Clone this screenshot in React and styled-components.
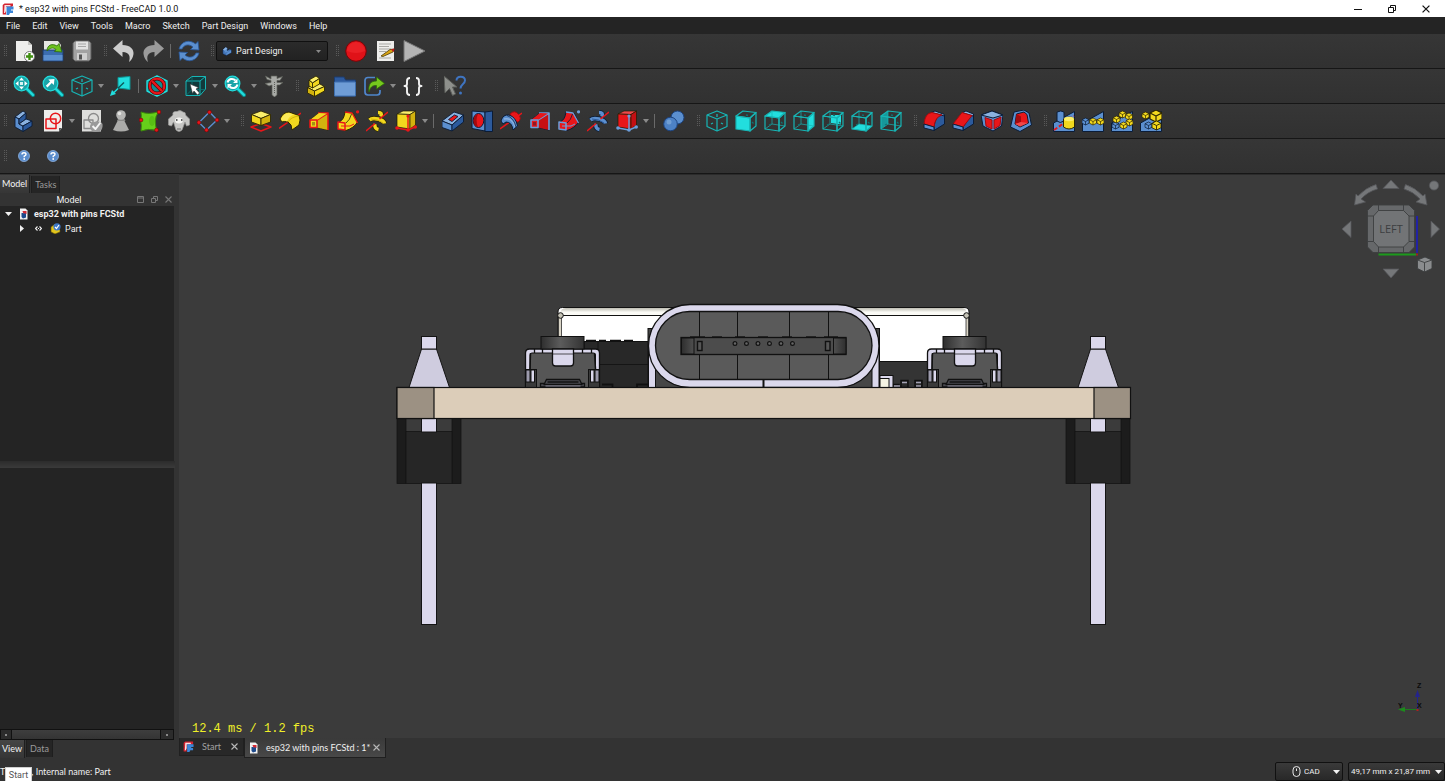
import React from "react";
import styled, { createGlobalStyle, css } from "styled-components";

const UI_FONT = 'Roboto, "Open Sans", sans-serif';
const NARROW_FONT = 'Lato, Roboto, sans-serif';

const GlobalStyle = createGlobalStyle`
  * { box-sizing: border-box; }
  html, body, #root { height: 100%; }
  body { margin: 0; background: #333333; color: #f0f0f0; font: 9px/12px ${UI_FONT}; overflow: hidden; }
  button, select { font: inherit; color: inherit; }
`;

/* ---------- window frame ---------- */

const Window = styled.div`
  display: flex;
  flex-direction: column;
  height: 100vh;
  position: relative;
`;

const TitleBar = styled.header`
  display: flex;
  align-items: center;
  height: 17px;
  flex: none;
  padding: 0 2px;
  gap: 5px;
  background: #ffffff;
  color: #111111;
`;

const WindowTitle = styled.h1`
  flex: 1;
  margin: 0;
  font-size: 9px;
  line-height: 16px;
  font-weight: 400;
`;

const WindowControls = styled.div`
  display: flex;
`;

const PlainButton = styled.button`
  display: flex;
  align-items: center;
  justify-content: center;
  padding: 0;
  border: 0;
  background: none;
`;

const WindowButton = styled(PlainButton)`
  width: 34px;
  height: 16px;
`;

const MenuBar = styled.nav`
  display: flex;
  flex: none;
  height: 17px;
  background: #242424;
`;

const MenuItem = styled(PlainButton)`
  padding: 0 6px;
  line-height: 16px;
`;

/* ---------- toolbars ---------- */

const ToolRow = styled.div`
  display: flex;
  align-items: center;
  flex: none;
  height: 35px;
  background: linear-gradient(#363636, #313131);
  border-bottom: 1px solid #161616;
`;

const DOTS = "repeating-linear-gradient(#5a5a5a 0 1px, transparent 1px 2px)";

const Handle = styled.span`
  flex: none;
  width: ${(p) => (p.$first ? 9 : p.$wide ? 14 : 13)}px;
  height: 12px;
  background: ${DOTS} right 4px top / 1px 12px no-repeat, ${DOTS} right 2px top / 1px 12px no-repeat;
`;

const Separator = styled.span`
  flex: none;
  width: 1px;
  height: 14px;
  margin: 0 ${(p) => (p.$wide ? 4 : 3)}px 0 3px;
  background: #6a6a6a;
`;

const Tool = styled(PlainButton)`
  flex: none;
  width: 29px;
  height: 29px;
`;

const DropTool = styled(PlainButton)`
  flex: none;
  width: 10px;
  height: 29px;
`;

const ComboBox = styled.label`
  display: flex;
  align-items: center;
  flex: none;
  width: 112px;
  height: 20px;
  padding: 0 6px 0 5px;
  border: 1px solid #101010;
  border-radius: 2px;
  background: linear-gradient(#2b2b2b, #222222);
`;

const PlainSelect = styled.select`
  flex: 1;
  min-width: 0;
  appearance: none;
  padding: 0 0 0 ${(p) => p.$indent || 0}px;
  border: 0;
  background: none;
  outline: 0;
`;

/* ---------- left dock ---------- */

const Body = styled.main`
  display: flex;
  flex: 1;
  min-height: 0;
`;

const Dock = styled.aside`
  display: flex;
  flex-direction: column;
  flex: none;
  width: 175px;
  margin-right: 4px;
`;

const TabStrip = styled.div`
  display: flex;
  flex: none;
  gap: 1px;
  height: ${(p) => p.$height}px;
  padding-top: ${(p) => p.$top || 0}px;
  align-items: ${(p) => (p.$top ? "flex-end" : "flex-start")};
  font-family: ${NARROW_FONT};
`;

const DockTab = styled(PlainButton)`
  height: 17px;
  padding: 0 3px;
  border: 1px solid #1e1e1e;
  border-width: 0 1px;
  background: #252525;
  color: #9a9a9a;
  ${(p) =>
    p.$active &&
    css`
      height: 18px;
      padding: 0 2px;
      border-left: 0;
      background: linear-gradient(#454545, #363636);
      color: #f4f4f4;
    `}
`;

const DockTitle = styled.div`
  display: flex;
  align-items: center;
  flex: none;
  height: 13px;
  padding-left: 5px;
`;

const DockName = styled.h2`
  flex: 1;
  margin: 0;
  font-size: 9px;
  font-weight: 400;
  line-height: 12px;
  text-align: center;
`;

const DockButton = styled(PlainButton)`
  width: 14px;
  height: 12px;
`;

const Tree = styled.ul`
  flex: 255 1 0;
  margin: 0 1px 0 0;
  padding: 0;
  list-style: none;
  background: #242424;
`;

const TreeRow = styled.li`
  display: flex;
  align-items: center;
  height: 15px;
  padding-left: ${(p) => (p.$child ? 18 : 4)}px;
  font-weight: ${(p) => (p.$child ? 400 : 700)};
`;

const TreeToggle = styled(PlainButton)`
  width: 8px;
  height: 10px;
`;

const TreeGlyph = styled.span`
  display: flex;
  margin-left: ${(p) => p.$gap}px;
`;

const TreeLabel = styled.span`
  margin-left: ${(p) => p.$gap}px;
`;

const Splitter = styled.div`
  flex: none;
  height: 7px;
  background: linear-gradient(#2c2c2c, #3a3a3a);
`;

const Properties = styled.section`
  flex: 261 1 0;
  margin-right: 1px;
  background: #242424;
`;

const ScrollTrack = styled.div`
  display: flex;
  align-items: stretch;
  flex: none;
  height: 11px;
  margin-right: 1px;
  border: 1px solid #111111;
  background: #1a1a1a;
`;

const ScrollThumb = styled.span`
  flex: 1;
  border: 1px solid #111111;
  border-width: 0 1px;
  background: linear-gradient(#3e3e3e, #343434);
`;

const ScrollEnd = styled(PlainButton)`
  width: ${(p) => p.$width}px;
  background: #2c2c2c;
`;

const ScrollDot = styled.span`
  width: 2px;
  height: 2px;
  background: #8a8a8a;
`;

/* ---------- document area ---------- */

const DocumentArea = styled.section`
  display: flex;
  flex-direction: column;
  flex: 1;
  min-width: 0;
`;

const Viewport = styled.div`
  position: relative;
  flex: 1;
  min-height: 0;
  background: #3b3b3b;
  border-top: 1px solid #2b2b2b;
`;

const Scene = styled.svg`
  display: block;
  width: 100%;
  height: 100%;
`;

const NavigationOverlay = styled.div`
  position: absolute;
  top: 1px;
  right: 1px;
`;

const AxisOverlay = styled.div`
  position: absolute;
  right: 15px;
  bottom: 20px;
`;

const FrameStats = styled.output`
  position: absolute;
  left: 13px;
  bottom: 2px;
  color: #f0f028;
  font: 12px/14px "Liberation Mono", monospace;
  white-space: pre;
`;

const DocumentTabs = styled.div`
  display: flex;
  align-items: flex-start;
  flex: none;
  height: 20px;
  font-family: ${NARROW_FONT};
`;

const DocumentTab = styled.div`
  display: flex;
  align-items: center;
  height: ${(p) => (p.$active ? 20 : 18)}px;
  width: ${(p) => (p.$active ? 142 : 65)}px;
  padding: 0 5px 0 ${(p) => (p.$active ? 4 : 3)}px;
  border: 1px solid #202020;
  border-top: 0;
  background: ${(p) => (p.$active ? "linear-gradient(#3a3a3a, #484848)" : "#282828")};
  color: ${(p) => (p.$active ? "#f0f0f0" : "#a0a0a0")};
`;

const TabName = styled(PlainButton)`
  flex: 1;
  justify-content: flex-start;
  padding-left: ${(p) => p.$gap}px;
  white-space: nowrap;
`;

/* ---------- status bar ---------- */

const StatusBar = styled.footer`
  display: flex;
  align-items: center;
  flex: none;
  height: 23px;
  gap: 5px;
  padding: 4px 0 0;
`;

const StatusText = styled.p`
  display: flex;
  flex: 1;
  gap: 26px;
  margin: 0;
  font-family: ${NARROW_FONT};
`;

const StatusCombo = styled.label`
  display: flex;
  align-items: center;
  width: ${(p) => p.$width}px;
  height: 19px;
  padding: 0 2px 0 ${(p) => p.$indent}px;
  border: 1px solid #111111;
  border-radius: 2px;
  background: linear-gradient(#3a3a3a, #282828);
  font-size: 8px;
`;

const Tooltip = styled.div`
  position: absolute;
  left: 5px;
  bottom: 0;
  width: 27px;
  padding-top: 1px;
  border: 1px solid #d0d0d0;
  border-bottom: 0;
  background: #ffffff;
  color: #555555;
  line-height: 12px;
  text-align: center;
`;

/* ---------- icon helpers ---------- */

const Glyph = ({ size = 22, children }) => (
  <svg width={size} height={size} viewBox="0 0 22 22" fill="none" strokeLinejoin="round" aria-hidden="true">
    {children}
  </svg>
);

const Caret = ({ color = "#8a8a8a", w = 6, h = 4 }) => (
  <svg width={w} height={h} viewBox="0 0 6 4" preserveAspectRatio="none" aria-hidden="true">
    <path d="M0 0H6L3 4Z" fill={color} />
  </svg>
);

const TEAL = "#17b5b5";
const CYAN = "#22dede";
const BLUE = "#5b8fcf";
const LIGHT_BLUE = "#8ab2e0";
const DARK_BLUE = "#2c5a9c";
const EDGE_BLUE = "#0b1c36";
const YELLOW = "#f2d81e";
const LIGHT_YELLOW = "#fbef6a";
const DARK_YELLOW = "#d2b20e";
const EDGE_YELLOW = "#2e2702";
const RED = "#e8161a";
const DARK_RED = "#a30a0e";

const NewFile = () => (
  <Glyph>
    <path d="M3 1H15L19 5V21H3Z" fill="#eeeeec" />
    <path d="M15 1V5H19Z" fill="#c4c4c0" />
    <circle cx="16.500" cy="16.500" r="5" fill="#fff" stroke="#777" />
    <path d="M16.500 13V20M13 16.500H20" stroke="#3f8f10" strokeWidth="2.400" />
  </Glyph>
);
const OpenFile = () => (
  <Glyph>
    <path d="M2 1H16L19 5V12H2Z" fill="#e6e6e2" />
    <path d="M1 10H21V21H1Z" fill="#3b6db0" stroke="#1c3b6b" />
    <path d="M1.500 15H20.500V20.500H1.500Z" fill={BLUE} />
    <path d="M5 11C5 5 10 3 15 6L17 3.500L20 12L12.500 11.500L14 9.500C11 7 8 8 5 11Z" fill="#6cc21c" stroke="#2c6a08" strokeWidth=".8" />
  </Glyph>
);
const SaveFile = () => (
  <Glyph>
    <path d="M2 3L4 1H18L20 3V19L18 21H4L2 19Z" fill="#a2a2a2" stroke="#5c5c5c" />
    <rect x="5" y="1.500" width="12" height="8" fill="#e2e2e2" />
    <path d="M7 4H15M7 6.500H15" stroke="#a6a6a6" />
    <rect x="6" y="13" width="10" height="7" fill="#cfcfcf" />
    <rect x="8" y="14.500" width="3" height="5" fill="#555" />
  </Glyph>
);
const UndoArrow = ({ mirror }) => (
  <Glyph>
    <g transform={mirror ? "translate(22 0) scale(-1 1)" : undefined}>
      <path d="M0 8.500L9.500 0V5C17 5 21 9 20.500 14C20 18 18 20.500 16 22C17.500 17 17 12.500 9.500 12V17Z" fill={mirror ? "#9b9b9b" : "#cdcdcd"} />
    </g>
  </Glyph>
);
const Refresh = () => (
  <Glyph>
    <g fill={BLUE} stroke="#28589a" strokeWidth=".8">
      <path d="M1 9C3 1 12 -1 17.500 4L20 1.500L21 10L12.500 9.500L15 7C11 3.500 6 4.500 4 9Z" />
      <path d="M21 13C19 21 10 23 4.500 18L2 20.500L1 12L9.500 12.500L7 15C11 18.500 16 17.500 18 13Z" />
    </g>
  </Glyph>
);
const PartDesignMark = ({ size }) => (
  <Glyph size={size}>
    <path d="M2 8L8 3L12 5V10L17 7L21 9V15L10 21L2 17Z" fill={BLUE} stroke={EDGE_BLUE} strokeWidth="1.200" />
    <path d="M2 8L6 10V19L2 17ZM6 15L14 12L17 7L21 9L10 15.500V21L6 19Z" fill={DARK_BLUE} opacity=".55" />
    <path d="M2 8L8 3L12 5L6 10Z" fill={LIGHT_BLUE} />
  </Glyph>
);
const Body3D = () => (
  <Glyph>
    <g stroke={EDGE_BLUE} strokeWidth=".9">
      <path d="M2 7L10 1L13 3L6 9Z" fill={LIGHT_BLUE} />
      <path d="M2 7L6 9V14L10 16V21.500L2 17Z" fill={BLUE} />
      <path d="M6 9L13 3V9L6 14Z" fill={DARK_BLUE} />
      <path d="M6 14L13 9L19 11L10 16Z" fill={LIGHT_BLUE} />
      <path d="M10 16L19 11V16L10 21.500Z" fill={DARK_BLUE} />
    </g>
  </Glyph>
);
const Record = () => (
  <Glyph>
    <circle cx="11" cy="11" r="10.300" fill="#e01218" stroke="#7a0508" />
    <path d="M2 11A9 9 0 0 1 20 11Q11 15 2 11Z" fill="#f02a2e" opacity=".6" />
  </Glyph>
);
const MacroEdit = () => (
  <Glyph>
    <rect x="3" y="1" width="17" height="20" fill="#eeeeec" />
    <path d="M5 4H17M5 6.500H15M5 9H17M5 11.500H12M5 18H17" stroke="#a9a9a5" />
    <path d="M7 16L16 9.500L20 9L19 12L9 16.500Z" fill="#d9a514" stroke="#4a3a08" strokeWidth=".8" />
    <path d="M17 9.500L20.500 8.500L19.500 12Z" fill="#c2161a" />
  </Glyph>
);
const Play = () => (
  <Glyph>
    <path d="M1 .5L22 11L1 21.500Z" fill="#b4b4b4" stroke="#757575" />
  </Glyph>
);

const Magnifier = ({ children }) => (
  <Glyph>
    <path d="M13.500 13.500L20 20" stroke="#0b8a8a" strokeWidth="4" strokeLinecap="round" />
    <path d="M14 14L20 20" stroke={CYAN} strokeWidth="2.200" strokeLinecap="round" />
    <circle cx="8.500" cy="8.500" r="7.300" fill="#1aa4a8" stroke={CYAN} strokeWidth="1.300" />
    {children}
  </Glyph>
);
const FitAll = () => (
  <Magnifier>
    <path d="M8.500 2.500L11 5.500H6ZM8.500 14.500L6 11.500H11ZM2.500 8.500L5.500 6V11ZM14.500 8.500L11.500 11V6Z" fill="#fff" />
    <rect x="7" y="7" width="3" height="3" fill="#d8f4f4" />
  </Magnifier>
);
const FitSelection = () => (
  <Magnifier>
    <path d="M12.500 4L11.800 10L9.800 8L5.500 12.500L3.800 10.800L8.200 6.500L6.300 4.600Z" fill="#fff" />
  </Magnifier>
);
const ViewSync = () => (
  <Magnifier>
    <path d="M3.500 7.500C4.500 3.500 9 3 11.500 5.500M13.500 9.500C12.500 13.500 8 14 5.500 11.500" stroke="#fff" strokeWidth="2" />
    <path d="M13.500 3.500V8H9ZM3.500 13.500V9H8Z" fill="#fff" />
  </Magnifier>
);

const Isometric = () => (
  <Glyph>
    <g stroke={TEAL} strokeWidth="1.200">
      <path d="M11 1L21 5V16.500L11 21L1 16.500V5Z" />
      <path d="M1 5L11 9L21 5M11 9V21" />
      <path d="M11 4V7M5 14L7 13M15 13L17 14" strokeWidth="1.300" />
    </g>
  </Glyph>
);
const AlignView = () => (
  <Glyph>
    <path d="M8 2.500L20 1.500V14.500L8 13Z" fill={CYAN} stroke="#0d9494" />
    <path d="M14 7.500L3 18" stroke="#0b5a5c" strokeWidth="1.400" />
    <path d="M8 13.500L4 17.500" stroke={CYAN} strokeWidth="1.400" />
    <path d="M0 21L2 15L6 19Z" fill={CYAN} />
  </Glyph>
);
const DrawStyle = () => (
  <Glyph>
    <path d="M1 6L11 1L21 6V16L11 21L1 16Z" fill="#0f8e90" stroke={CYAN} strokeWidth="1.400" />
    <circle cx="11" cy="11" r="7.300" stroke="#5a0406" strokeWidth="3.600" />
    <circle cx="11" cy="11" r="7.300" stroke={RED} strokeWidth="2.200" />
    <path d="M6 6L16 16" stroke="#5a0406" strokeWidth="3.800" />
    <path d="M6 6L16 16" stroke={RED} strokeWidth="2.400" />
  </Glyph>
);
const BoxSelect = () => (
  <Glyph>
    <path d="M1 6L7 1.500H20.500V14L15 20.500H1Z" fill="#12393b" stroke={TEAL} />
    <path d="M1 6H15V20M15 6L20.500 1.500" stroke={TEAL} />
    <path d="M7 2V14.500L1.500 20M7 14.500H20" stroke="#0e7474" strokeWidth=".8" />
    <path d="M5 9L13.500 12.500L11 14L14.500 18L12.500 20L9 16L7.500 18.500Z" fill="#fff" stroke="#333" strokeWidth=".6" />
  </Glyph>
);
const Caliper = () => (
  <Glyph>
    <path d="M2.500 1L8 4V1H14V3.500L19.500 1.500L17 5.500H14V7.500H20L16.500 10H14V20L11.500 22L9 20V10L6 11L2 8.500L8 7.500V5.500L4 4.500Z" fill="#a8aaa6" stroke="#5c5e58" strokeWidth=".7" />
    <path d="M11.500 7V19" stroke="#5e605a" strokeDasharray="1 1" />
  </Glyph>
);
const PartBlocks = () => (
  <Glyph>
    <g stroke={EDGE_YELLOW} strokeWidth=".9">
      <path d="M2.500 12.500L14 8.500L19.500 11.500L9.500 16Z" fill={LIGHT_YELLOW} />
      <path d="M9.500 16L19.500 11.500V16L9.500 21.500Z" fill={YELLOW} />
      <path d="M2.500 12.500L9.500 16V21.500L2.500 18Z" fill={DARK_YELLOW} />
      <path d="M4 5L11 1L14.500 3.500L7.500 8Z" fill={LIGHT_YELLOW} />
      <path d="M4 5L7.500 8L14.500 3.500V9L7.500 13L4 11Z" fill={YELLOW} />
      <path d="M7.500 8V13" />
    </g>
  </Glyph>
);
const Group = () => (
  <Glyph>
    <path d="M.5 2H10L11.500 5H21.500V21H.5Z" fill="#2d5a9e" stroke="#1c3d70" />
    <path d="M.5 7H21.500V21H.5Z" fill="#6f9dd6" stroke="#3e6fae" />
  </Glyph>
);
const LinkMake = () => (
  <Glyph>
    <path d="M12 2.500H5Q2 2.500 2 5.500V17Q2 20 5 20H14Q17 20 17 17V15" stroke="#4f86cc" strokeWidth="1.700" />
    <path d="M6 17C5 9 8 6 13.500 6V2L21.500 8.500L13.500 14V10.500C9 10.500 7.500 12 6 17Z" fill="#76c81e" stroke="#2c6a08" strokeWidth=".8" />
  </Glyph>
);
const Expression = () => (
  <Glyph>
    <path d="M8 3Q5 3 5 6V9Q5 11 2.500 11Q5 11 5 13V17Q5 20 8 20M14 3Q17 3 17 6V9Q17 11 19.500 11Q17 11 17 13V17Q17 20 14 20" stroke="#f2f2f2" strokeWidth="1.900" />
  </Glyph>
);
const WhatsThis = () => (
  <Glyph>
    <path d="M0 1L13 12H8.500L11.500 19L8.500 20.500L5.500 13.500L1 18Z" fill="#8e908c" stroke="#5a5c58" />
    <path d="M12.500 5.500C12.500 .5 21 .5 21 5.500C21 9 16.500 9 16.500 13.500" stroke="#3f74c0" strokeWidth="2" />
    <circle cx="16.500" cy="18" r="1.500" fill="#3f74c0" />
  </Glyph>
);

const NewSketch = () => (
  <Glyph>
    <path d="M2 0H20V18L17 21.500H2Z" fill="#eeeeec" />
    <path d="M20 18H17V21.500Z" fill="#555" />
    <rect x="4" y="9" width="10" height="9.500" stroke={RED} strokeWidth="1.500" />
    <circle cx="13.500" cy="8.500" r="5.200" stroke={RED} strokeWidth="1.500" />
  </Glyph>
);
const ValidateSketch = () => (
  <Glyph>
    <path d="M1 0H20V21.500H1Z" fill="#dededc" />
    <rect x="3" y="10" width="9" height="8.500" stroke="#8a8a8a" strokeWidth="1.300" />
    <circle cx="12.500" cy="8.500" r="5" stroke="#8a8a8a" strokeWidth="1.300" />
    <path d="M9 16C10 11 20 10 21.500 14C22 19 20 22 15 22C11 22 9 20 9 16Z" fill="#9a9a9a" />
    <path d="M11.500 16L14.500 19L19.500 12.500" stroke="#f4f4f4" strokeWidth="2" />
  </Glyph>
);
const CheckGeometry = () => (
  <Glyph>
    <path d="M8.500 9L3 20Q11 23 19 20L13.500 9Z" fill="#ababa9" />
    <path d="M8 9H14.500L15.500 11H7Z" fill="#8a8a88" />
    <circle cx="11" cy="5" r="4.800" fill="#b6b6b4" />
    <circle cx="9.500" cy="3.500" r="1.800" fill="#e4e4e2" />
  </Glyph>
);
const SubShape = () => (
  <Glyph>
    <path d="M2 2Q10 5 20 1.500Q16 6 16.500 11Q16 16 18 20.500Q9 18 2 21Q3 15 1.500 10.500Q3 6 2 2Z" fill="#66d01a" stroke="#3c8a0a" />
    <ellipse cx="13" cy="11" rx="3" ry="5" fill="#4aa80e" opacity=".45" />
    <g fill={RED} stroke="#6b0406" strokeWidth=".6">
      <circle cx="20" cy="2" r="1.900" />
      <circle cx="2" cy="10" r="1.900" />
      <circle cx="17.500" cy="20" r="1.900" />
    </g>
  </Glyph>
);
const Sheep = () => (
  <Glyph>
    <path d="M5 5Q4 1 9 1.500Q12 -.5 15 2Q18 2 17.500 5L21.500 9V15L18.500 16L17 12L14 20Q11 23 8 20L5.500 12L3.500 16L.5 15V9Z" fill="#c6c6c4" stroke="#9a9a98" strokeWidth=".7" />
    <ellipse cx="11" cy="10.500" rx="4" ry="3" fill="#f2f2f0" />
    <path d="M8 10H9.500M13 10H14.500" stroke="#333" strokeWidth="1.500" />
    <path d="M9 19H13" stroke="#666" />
  </Glyph>
);
const Datum = () => (
  <Glyph>
    <path d="M12.500 2L20 10L9.500 20L2 12.500Z" stroke={BLUE} strokeWidth="1.400" />
    <g fill={RED} stroke="#6b0406" strokeWidth=".6">
      <circle cx="12.500" cy="2.200" r="1.900" />
      <circle cx="20" cy="10" r="1.900" />
      <circle cx="9.500" cy="20" r="1.900" />
      <circle cx="1.900" cy="12.500" r="1.900" />
    </g>
  </Glyph>
);

const Pad = () => (
  <Glyph>
    <path d="M1 17L11 13.500L21 17L11 21Z" stroke={RED} strokeWidth="1.400" />
    <g stroke={EDGE_YELLOW} strokeWidth=".9">
      <path d="M1.500 4.500L11 1L20.500 4.500L11 8.500Z" fill={LIGHT_YELLOW} />
      <path d="M1.500 4.500L11 8.500V15.500L1.500 12Z" fill={YELLOW} />
      <path d="M11 8.500L20.500 4.500V12L11 15.500Z" fill={DARK_YELLOW} />
    </g>
  </Glyph>
);
const Revolution = () => (
  <Glyph>
    <path d="M0 18.500L22 3" stroke={RED} strokeWidth="1.500" />
    <path d="M1 9Q4 2 10 2L20 5.500Q22 10 20 15L13 20Q13 14 9 12Q5 11 3 12Z" fill={YELLOW} stroke={EDGE_YELLOW} />
    <path d="M2 9Q5 3 10 3L15 4.500Q10 6 8 11.500Q5 10 3 11Z" fill={LIGHT_YELLOW} opacity=".8" />
    <path d="M9 12Q12 7 19.500 6" stroke={DARK_YELLOW} />
  </Glyph>
);
const Loft = ({ fill, frame, edge, dark }) => (
  <Glyph>
    <path d="M2 10L11 3H20V20L9 17.500H2Z" fill={fill} stroke={edge} />
    <path d="M9 10L20 3V20L9 17.500Z" fill={dark} />
    <path d="M10 3H20V20M9 10L20 3" stroke={frame} strokeWidth="1.600" />
    <path d="M2 10L11 3L19 3.500L9 10Z" fill={fill} />
    <rect x="2" y="10" width="7" height="7.500" fill={fill} stroke={frame} strokeWidth="1.600" />
    <rect x="4" y="12" width="3" height="3.500" fill={edge} opacity=".4" />
  </Glyph>
);
const Pipe = ({ fill, frame, edge }) => (
  <Glyph>
    <path d="M8 2L16 3L20.500 12Q17 18 9 20.500L2 19V12Q7 10 8 2Z" fill={fill} stroke={edge} />
    <path d="M8 2L15 3L20.500 13" stroke={frame} strokeWidth="1.300" />
    <path d="M9 13Q13 10 14.500 4" stroke={edge} strokeWidth=".8" />
    <path d="M1 12L8 13V20L1 19Z" fill={fill} stroke={frame} strokeWidth="1.500" />
    <path d="M4 16H13L17 14" stroke={frame} strokeWidth="1" />
    <circle cx="20.500" cy="1.800" r="1.600" fill={frame} />
  </Glyph>
);
const HELIX_COIL = "M12 2.500Q17 2.500 14.500 6.500M3.500 10Q6 7.500 12 9Q18 10.500 18.500 13.500M9 14Q8 18.500 12.500 19.500";
const Helix = ({ fill, dark, edge }) => (
  <Glyph>
    <path d={HELIX_COIL} stroke={edge} strokeWidth="5" />
    <path d={HELIX_COIL} stroke={fill} strokeWidth="3.500" />
    <path d="M5 9Q12 9 17 13" stroke={dark} />
    <path d="M0 21L9 13.500M13.500 9L22 2" stroke={RED} strokeWidth="1.600" />
  </Glyph>
);
const Primitive = ({ top, left, right, frame }) => (
  <Glyph>
    <path d="M2 4L8 1H20.500L15 4.500Z" fill={top} stroke="#201c04" strokeWidth=".7" />
    <path d="M2 4L15 4.500V19L2 17Z" fill={left} stroke="#201c04" strokeWidth=".7" />
    <path d="M15 4.500L20.500 1V15L15 19Z" fill={right} stroke="#201c04" strokeWidth=".7" />
    <path d="M2 18L13 20L20 17M13 20V6" stroke={frame} strokeWidth="1.400" />
    <g fill={frame}>
      <circle cx="2" cy="18" r="1.800" />
      <circle cx="13" cy="20" r="1.800" />
      <circle cx="20.200" cy="17" r="1.800" />
      <circle cx="13" cy="6" r="1.600" />
    </g>
  </Glyph>
);

const Pocket = () => (
  <Glyph>
    <g stroke={EDGE_BLUE} strokeWidth=".9">
      <path d="M0 11L12 2L21.500 5L10 15Z" fill={LIGHT_BLUE} />
      <path d="M0 11L10 15V21L0 17.500Z" fill={BLUE} />
      <path d="M10 15L21.500 5V12L10 21Z" fill={DARK_BLUE} />
      <path d="M6.500 9.500L12.500 5L16 6.500L10 11.500Z" fill={RED} />
    </g>
  </Glyph>
);
const Hole = () => (
  <Glyph>
    <path d="M1 1L14 2V21L1 18.500Z" fill={BLUE} stroke={EDGE_BLUE} />
    <path d="M14 2L21.500 1V21.500H14Z" fill={DARK_BLUE} stroke={EDGE_BLUE} />
    <ellipse cx="7.500" cy="10.500" rx="5.300" ry="7" fill={RED} stroke={EDGE_BLUE} />
    <path d="M7 4Q4 10 7 17Q2 16 2.500 10Q3 5 7 4Z" fill={DARK_RED} />
  </Glyph>
);
const Groove = () => (
  <Glyph>
    <path d="M10 4Q15 -1 19 5Q22 9 18 12L13 12Z" fill={RED} stroke={DARK_RED} />
    <path d="M0 19L22 3" stroke={RED} strokeWidth="1.500" />
    <path d="M1 11Q3 4 9 5Q16 7 17.500 16L13 20Q12 12 6 12L3 14Z" fill={BLUE} stroke={EDGE_BLUE} />
    <path d="M4 9Q12 7 15 17" stroke={LIGHT_BLUE} strokeWidth="1.400" />
    <path d="M7 5.500Q14 8 16 17" stroke={EDGE_BLUE} strokeWidth=".7" />
  </Glyph>
);
const BooleanOp = () => (
  <Glyph>
    <circle cx="14.500" cy="7.500" r="6.500" fill={BLUE} stroke="#1d4480" />
    <circle cx="7.500" cy="14" r="6.800" fill="#4d82c6" stroke="#1d4480" />
    <circle cx="6" cy="12" r="2.500" fill={LIGHT_BLUE} opacity=".6" />
  </Glyph>
);

const FACES = {
  front: "M1 6L15 8V21L1 19Z",
  top: "M1 6L8 1L21 2.500L15 8Z",
  right: "M15 8L21 2.500V16L15 21Z",
  rear: "M9 5L19 5V14.500L9 13Z",
  bottom: "M1 19L8 14L21 16L15 21Z",
  left: "M1 6L8 1V14L1 19Z",
};
const FaceCube = ({ face }) => (
  <Glyph>
    <path d={FACES[face]} fill={face === "left" ? "#16989a" : CYAN} />
    <g stroke={TEAL} strokeWidth="1.200">
      <path d={FACES.front} />
      <path d={FACES.top} />
      <path d={FACES.right} />
      {face !== "front" && <path d="M8 1V14L1 19M8 14L21 16" strokeWidth=".7" />}
    </g>
    <g stroke="#0e7474" strokeWidth="1.300">
      {face !== "front" && <path d="M5 15L7 14" />}
      {face !== "top" && <path d="M11 5L13 5.500" />}
      {face !== "right" && <path d="M17 12L18.500 13.500" />}
    </g>
  </Glyph>
);

const Fillet = () => (
  <Glyph>
    <path d="M11 17Q12 7 18 4L21.500 6V14L11 20.500Z" fill={DARK_BLUE} stroke={EDGE_BLUE} />
    <path d="M8 2.500L12 1L21.500 4.500V6L18 5Z" fill={LIGHT_BLUE} stroke={EDGE_BLUE} />
    <path d="M1 14Q2 3 9 2.500L19 5Q12 7 11 17Z" fill={RED} stroke={DARK_RED} />
    <path d="M1 14L11 17V20.500L1 18Z" fill={BLUE} stroke={EDGE_BLUE} />
  </Glyph>
);
const Chamfer = () => (
  <Glyph>
    <path d="M19 5L21.500 6V14L11 20.500V17Z" fill={DARK_BLUE} stroke={EDGE_BLUE} />
    <path d="M10 2.500L14 1L21.500 4V6L19 5.500Z" fill={LIGHT_BLUE} stroke={EDGE_BLUE} />
    <path d="M1 14L10 2.500L20 5.500L11 17Z" fill={RED} stroke={DARK_RED} />
    <path d="M1 14L11 17V20.500L1 18Z" fill={BLUE} stroke={EDGE_BLUE} />
  </Glyph>
);
const Draft = () => (
  <Glyph>
    <path d="M0 5L11 1L22 5L20.500 16L12 21L2 16Z" fill={BLUE} stroke={EDGE_BLUE} />
    <path d="M0 5L11 1L22 5L12 8Z" fill={LIGHT_BLUE} stroke={EDGE_BLUE} />
    <path d="M4 7.500L11 10V19L5 16Z" fill={RED} stroke={DARK_RED} />
    <path d="M13 10L20 7L19 15.500L13 19Z" fill={RED} stroke={DARK_RED} />
  </Glyph>
);
const Thickness = () => (
  <Glyph>
    <path d="M4 2L14 0L19 3L21.500 15L10 21.500L.5 17Z" fill={BLUE} stroke={EDGE_BLUE} />
    <path d="M6.500 4L14 2L17 4.500L18.500 13L10 17L5 14Z" fill={RED} stroke={EDGE_BLUE} />
    <path d="M6.500 4L11 6.500V12L5 14Z" fill={DARK_RED} />
    <path d="M11 12L18 13L10 16.500L5 14Z" fill="#f0484a" />
  </Glyph>
);

const MiniBox = ({ x, y, s = 6, blue }) => (
  <g transform={`translate(${x} ${y}) scale(${s / 6})`} stroke={blue ? EDGE_BLUE : EDGE_YELLOW} strokeWidth=".6">
    <path d="M0 1.500L3 0L6 1.500V4.500L3 6L0 4.500Z" fill={blue ? BLUE : YELLOW} />
    <path d="M0 1.500L3 3L6 1.500M3 3V6" />
  </g>
);
const Slope = () => <path d="M.5 13L21.500 1.500V21.500H.5Z" fill={BLUE} stroke={EDGE_BLUE} />;
const Mirrored = () => (
  <Glyph>
    <Slope />
    <path d="M1 20L21 6" stroke={RED} strokeWidth="2" strokeDasharray="4 2" />
    <path d="M4 2Q8 0 11 2V11Q7 14 4 11Z" fill={BLUE} stroke={EDGE_BLUE} />
    <path d="M10.500 9Q16 5 21.500 9V17Q16 21 10.500 17Z" fill={YELLOW} stroke={EDGE_YELLOW} />
    <ellipse cx="16" cy="9" rx="5" ry="2.200" fill={LIGHT_YELLOW} />
  </Glyph>
);
const LinearPattern = () => (
  <Glyph>
    <Slope />
    <MiniBox x={0} y={8} s={7} blue />
    <MiniBox x={7.5} y={8} s={7} />
    <MiniBox x={15} y={8} s={7} />
  </Glyph>
);
const PolarPattern = () => (
  <Glyph>
    <Slope />
    <MiniBox x={1} y={12} s={7} blue />
    <MiniBox x={2} y={6} s={7} />
    <MiniBox x={8} y={1} s={7} />
    <MiniBox x={14.5} y={3} s={7} />
    <MiniBox x={15} y={9} s={7} />
    <MiniBox x={9} y={12} s={7} />
  </Glyph>
);
const MultiTransform = () => (
  <Glyph>
    <Slope />
    <MiniBox x={10} y={0} s={12} />
    <MiniBox x={2} y={2} s={7} />
    <MiniBox x={5} y={12} s={7} blue />
    <MiniBox x={12} y={11} s={9} />
  </Glyph>
);
const HelpDot = () => (
  <Glyph>
    <circle cx="11" cy="11" r="5.500" fill="#5a8ccc" stroke="#8fb4e2" strokeWidth=".8" />
    <path d="M9 9.500Q9 7.800 11 7.800Q13 7.800 13 9.300Q13 10.400 11.200 11.200V12.200" stroke="#fff" strokeWidth="1.400" />
    <circle cx="11.200" cy="14" r=".9" fill="#fff" />
  </Glyph>
);

const FreeCadLogo = ({ size = 12 }) => (
  <svg width={size} height={size} viewBox="0 0 12 12" aria-hidden="true">
    <path d="M2.500 .5H11V3L9.500 4H4V11.500H.7V2Z" fill="#d4232f" />
    <path d="M2.500 2H8.500V3.500H4V8L3 10H2Z" fill="#fff" opacity=".85" />
    <path d="M4.500 3.500H11.500V6.500H9V7.500H11V10H8L7 12H4.500Z" fill="#3b86d8" />
  </svg>
);
const DocIcon = () => (
  <svg width="9" height="12" viewBox="0 0 9 12" aria-hidden="true">
    <path d="M1 .5H6.500L8.500 2.500V11.500H1Z" fill="#f2f2f2" />
    <path d="M3.500 3H7.500V6H4.500Z" fill="#d42a34" />
    <path d="M2.500 5H4.500V5.500H7V9.500L4 10.500L2.500 9Z" fill="#1d4a8c" />
  </svg>
);
const CloseMark = ({ size = 7, color = "#b8b8b8" }) => (
  <svg width={size} height={size} viewBox="0 0 7 7" aria-hidden="true">
    <path d="M.5 .5L6.500 6.500M6.500 .5L.5 6.500" stroke={color} strokeWidth="1.100" />
  </svg>
);

/* ---------- toolbar contents ---------- */

const ADD = { fill: YELLOW, frame: RED, edge: EDGE_YELLOW, dark: DARK_YELLOW };
const CUT = { fill: RED, frame: "#6c9edb", edge: EDGE_BLUE, dark: "#c81014" };

const FILE_TOOLS = [
  "handle",
  ["New", <NewFile />],
  ["Open", <OpenFile />],
  ["Save", <SaveFile />],
  "handle",
  ["Undo", <UndoArrow />],
  ["Redo", <UndoArrow mirror />],
  "separator",
  ["Refresh", <Refresh />],
  "handle",
  "workbench",
  "handle",
  ["Record macro", <Record />],
  ["Macros", <MacroEdit />],
  ["Execute macro", <Play />],
];

const VIEW_TOOLS = [
  "handle",
  ["Fit all", <FitAll />],
  ["Fit selection", <FitSelection />],
  ["Isometric", <Isometric />, true],
  ["Align to selection", <AlignView />],
  "separator",
  ["Draw style", <DrawStyle />, true],
  ["Box selection", <BoxSelect />, true],
  ["Sync view", <ViewSync />, true],
  ["Measure", <Caliper />],
  "handle",
  ["Create part", <PartBlocks />],
  ["Create group", <Group />],
  ["Make link", <LinkMake />, true],
  ["Variable set", <Expression />],
  "handle",
  ["What's this?", <WhatsThis />],
];

const PART_TOOLS = [
  "handle",
  ["Create body", <Body3D />],
  ["Create sketch", <NewSketch />, true],
  ["Validate sketch", <ValidateSketch />],
  ["Check geometry", <CheckGeometry />],
  ["Sub-shape binder", <SubShape />],
  ["Clone", <Sheep />],
  ["Create datum", <Datum />, true],
  "handle",
  ["Pad", <Pad />],
  ["Revolution", <Revolution />],
  ["Additive loft", <Loft {...ADD} />],
  ["Additive pipe", <Pipe {...ADD} />],
  ["Additive helix", <Helix {...ADD} />],
  ["Additive primitive", <Primitive top={LIGHT_YELLOW} left={YELLOW} right={DARK_YELLOW} frame={RED} />, true],
  "separator",
  ["Pocket", <Pocket />],
  ["Hole", <Hole />],
  ["Groove", <Groove />],
  ["Subtractive loft", <Loft {...CUT} />],
  ["Subtractive pipe", <Pipe {...CUT} />],
  ["Subtractive helix", <Helix fill={BLUE} dark={DARK_BLUE} edge={EDGE_BLUE} />],
  ["Subtractive primitive", <Primitive top="#f0484a" left={RED} right="#c40f13" frame="#6c9edb" />, true],
  "separator",
  ["Boolean", <BooleanOp />],
  "handle",
  ["Isometric view", <Isometric />],
  ["Front view", <FaceCube face="front" />],
  ["Top view", <FaceCube face="top" />],
  ["Right view", <FaceCube face="right" />],
  ["Rear view", <FaceCube face="rear" />],
  ["Bottom view", <FaceCube face="bottom" />],
  ["Left view", <FaceCube face="left" />],
  "handle",
  ["Fillet", <Fillet />],
  ["Chamfer", <Chamfer />],
  ["Draft", <Draft />],
  ["Thickness", <Thickness />],
  "handle",
  ["Mirrored", <Mirrored />],
  ["Linear pattern", <LinearPattern />],
  ["Polar pattern", <PolarPattern />],
  ["Multi-transform", <MultiTransform />],
];

const HELP_TOOLS = ["handle", ["Help", <HelpDot />], ["Part Design help", <HelpDot />]];

const WorkbenchSelector = () => (
  <ComboBox>
    <PartDesignMark size={10} />
    <PlainSelect aria-label="Workbench" $indent={4}>
      <option>Part Design</option>
    </PlainSelect>
    <Caret w={5} h={3} />
  </ComboBox>
);

const Toolbar = ({ items, label, wide }) => (
  <ToolRow role="toolbar" aria-label={label}>
    {items.map((item, i) => {
      if (item === "handle") return <Handle key={i} $first={i === 0} $wide={wide} />;
      if (item === "separator") return <Separator key={i} $wide={wide} />;
      if (item === "workbench") return <WorkbenchSelector key={i} />;
      const [name, icon, menu] = item;
      return (
        <React.Fragment key={i}>
          <Tool aria-label={name}>{icon}</Tool>
          {menu && (
            <DropTool aria-label={`${name} options`}>
              <Caret />
            </DropTool>
          )}
        </React.Fragment>
      );
    })}
  </ToolRow>
);

/* ---------- 3D scene ---------- */

const LILAC = "#dbd8ec";

const HeaderPin = ({ x }) => (
  <g stroke="#141414" strokeWidth="1">
    <path d={`M${x} 349h15l13 38.500h-40.500z`} fill="#cfccdf" />
    <rect x={x} y="336.500" width="15" height="12.500" fill={LILAC} />
    <rect x={x} y="418" width="15" height="14" fill={LILAC} />
    <rect x={x} y="483" width="15" height="141.500" fill={LILAC} />
  </g>
);

const HeaderBlock = ({ x }) => (
  <g stroke="#141414" strokeWidth=".8">
    <rect x={x} y="418.500" width="9" height="65" fill="#1c1c1c" />
    <rect x={x + 55} y="418.500" width="9" height="65" fill="#1c1c1c" />
    <rect x={x + 9} y="431.500" width="46" height="52" fill="#262626" />
  </g>
);

const TactSwitch = ({ x }) => (
  <g transform={`translate(${x} 0)`} stroke="#111" strokeWidth="1">
    <path d="M0 387.500V353q0-4 4-4H70q4 0 4 4V387.500Z" fill={LILAC} strokeWidth="1.300" />
    <path d="M4.500 387.500V355q0-2 2-2H68q2 0 2 2V387.500Z" fill="#565656" />
    <path d="M9 349v4M17 349v4M57 349v4M66 349v4" strokeWidth="1.300" />
    <rect x="15.500" y="336.500" width="43" height="12.500" fill="url(#capShade)" />
    <path d="M27 349V363q0 3 3 3H45q3 0 3-3V349Z" fill={LILAC} strokeWidth="1.300" />
    <path d="M27 354H48" strokeWidth=".7" />
    <path d="M5 353L4.500 369M69 353L70 369" strokeWidth="1.500" />
    <rect x="0" y="369.500" width="11" height="18" fill="#3a3a3a" />
    <rect x=".5" y="370" width="4" height="12" fill="#9d9bad" />
    <rect x="5.500" y="370" width="3.500" height="12" fill={LILAC} />
    <rect x="63" y="369.500" width="11" height="18" fill="#3a3a3a" />
    <rect x="65" y="370" width="3.500" height="12" fill={LILAC} />
    <rect x="69.500" y="370" width="4" height="12" fill="#9d9bad" />
    <path d="M15 387V383.500H19L21 379.500H54L56 383.500H59V387Z" fill="#4a4a50" strokeWidth="1.300" />
    <path d="M18 384.500H57M22 382H53" strokeWidth="1.300" />
    <path d="M20 386H55" stroke="#8d8b9b" />
  </g>
);

const PIN_HOLES = [735, 746.5, 758, 769.5, 781, 792.5];

const BoardModel = () => (
  <Scene viewBox="179 175 1266 563" role="img" aria-label="ESP32 board with pins, left view">
    <defs>
      <linearGradient id="capShade">
        <stop offset="0" stopColor="#2e2e2e" />
        <stop offset=".45" stopColor="#5c5c5c" />
        <stop offset="1" stopColor="#333" />
      </linearGradient>
      <linearGradient id="tongueShade">
        <stop offset="0" stopColor="#2e2e2e" />
        <stop offset="1" stopColor="#505050" />
      </linearGradient>
      <linearGradient id="shieldEdge" x2="0" y2="1">
        <stop offset="0" stopColor="#bdbcb2" />
        <stop offset=".6" stopColor="#fbfbf6" />
      </linearGradient>
    </defs>

    <g stroke="#111">
      <path d="M558 341V312q0-4.500 4.500-4.500H964q5 0 5 4.500V362H558Z" fill="#ffffff" />
      <path d="M560 315Q560 308 566 308H962Q967 308 967 315Z" fill="url(#shieldEdge)" stroke="none" />
      <path d="M558.500 316H561.500V341H558.500ZM966 316H968.500V362H966Z" fill="#d9d4c6" strokeWidth=".7" />
      <path d="M561 315.500H966" strokeWidth="1" />
      <circle cx="560.500" cy="315.500" r="2.800" fill="#c5c3b6" />
      <circle cx="966.500" cy="315.500" r="2.800" fill="#c5c3b6" />
    </g>

    <g stroke="#101010">
      <rect x="584" y="341.500" width="65" height="46" fill="#282828" />
      <path d="M600 364.500H648M598 342V350" strokeWidth=".8" />
      <path d="M586 340.500H596M599 340.500H606M610 340.500H621M624 340.500H633" strokeWidth="1.500" />
      <path d="M602 384.500H612.500V387.500M637 387V384.500H648" fill="none" strokeWidth="1.800" />
      <rect x="879" y="361.500" width="49" height="26" fill="#343434" />
      <rect x="880" y="375.500" width="13" height="12" fill={LILAC} />
      <rect x="880" y="378.500" width="9" height="9" fill="#f5f3e3" />
      <path d="M893 384.500H899V387M901 380.500H908V387.500H901Z M915 380.500H922V387H915Z" fill="#2a2a2a" strokeWidth="1.500" />
      <path d="M894 386H900M902 382.500H907M916 382.500H921M916 386H921" stroke="#a5a3b5" strokeWidth="1.300" />
    </g>

    <TactSwitch x={525.5} />
    <TactSwitch x={927.5} />

    <g stroke="#111">
      <rect x="648" y="328.500" width="231.500" height="59" fill="#464646" />
      <rect x="648.500" y="345" width="7" height="42.500" fill={LILAC} />
      <rect x="872" y="345" width="7" height="42.500" fill={LILAC} />
      <rect x="648.500" y="304.500" width="230.500" height="83" rx="41.500" fill={LILAC} strokeWidth="1.300" />
      <rect x="655.500" y="311.500" width="216.500" height="68" rx="34" fill="#5a5a5a" strokeWidth="1.300" />
      <path d="M699.500 312V379M737.500 312V379M789.500 312V379M828.500 312V379" />
      <path d="M763.500 380V387" strokeWidth="2" />
      <rect x="681" y="337.500" width="165" height="17" fill="#4c4c4c" strokeWidth="1.300" />
      <rect x="681.500" y="338" width="12.500" height="16" fill="url(#tongueShade)" />
      <rect x="833.500" y="338" width="12.500" height="16" fill="url(#tongueShade)" transform="rotate(180 839.750 346)" />
      <path d="M690 336.500H705M712 336.500H722M735 336.500H745M758 336.500H768M782 336.500H792M806 336.500H816M824 336.500H838" strokeWidth=".7" />
      <rect x="697.500" y="341.500" width="4.500" height="9" fill="#565656" strokeWidth="1.400" />
      <rect x="825.500" y="341.500" width="4.500" height="9" fill="#565656" strokeWidth="1.400" />
      {PIN_HOLES.map((x) => (
        <circle key={x} cx={x} cy="343.500" r="1.900" fill="#666" strokeWidth="1.200" />
      ))}
    </g>

    <HeaderBlock x={397} />
    <HeaderBlock x={1066} />
    <HeaderPin x={421.5} />
    <HeaderPin x={1090.5} />

    <g stroke="#111" strokeWidth="1.200">
      <rect x="397" y="387.500" width="733" height="31" fill="#dccdb9" />
      <rect x="397" y="387.500" width="37" height="31" fill="#9c9183" />
      <rect x="1094" y="387.500" width="36.500" height="31" fill="#9c9183" />
    </g>
  </Scene>
);

const NavigationCube = () => (
  <svg width="106" height="104" viewBox="1338 176 106 104" role="img" aria-label="Navigation cube">
    <g fill="#757779" stroke="#55575a" strokeWidth=".8">
      <path d="M1391 180L1399 188.500H1383Z" />
      <path d="M1391 278L1383 269H1399Z" />
      <path d="M1342 229L1351 221V237.500Z" />
      <path d="M1439.500 229L1431 221V237.500Z" />
      <circle cx="1434" cy="185.500" r="4.600" />
      <path d="M1376 184.500L1377.500 189Q1368 191.500 1361 199L1365.500 202L1354.500 205L1356 194L1358 196Q1366 187.500 1376 184.500Z" />
      <path d="M1405.500 184.500L1404 189Q1413 191.500 1420 199L1416 202L1427 205L1425 194L1423 196Q1415 187.500 1405.500 184.500Z" />
    </g>
    <g stroke="#3c3e40" strokeWidth=".9">
      <path d="M1373 205H1409L1414.500 210.500V247L1409 252.500H1373L1367.500 247V210.500Z" fill="#66686a" />
      <path d="M1378.500 210.500H1403.500L1409 216V241.500L1403.500 247H1378.500L1373.500 241.500V216Z" fill="#727476" />
      <path d="M1378.500 205V210.500M1403.500 205V210.500M1378.500 247V252.500M1403.500 247V252.500M1367.500 216H1373.500M1409 216H1414.500M1367.500 241.500H1373.500M1409 241.500H1414.500" />
    </g>
    <text x="1391" y="232.500" textAnchor="middle" fontFamily="Open Sans, sans-serif" fontSize="11" fill="#3c3e40">
      LEFT
    </text>
    <path d="M1417 216V253" stroke="#2222a4" strokeWidth="2" />
    <path d="M1378.500 254.500H1416" stroke="#1c9a1c" strokeWidth="2" />
    <rect x="1416" y="253.500" width="2" height="2" fill="#a02020" />
    <g stroke="#3c3e40" fill="#8a8c8e" strokeWidth=".9">
      <path d="M1417.500 260L1425 257L1432 260V268.500L1424.500 272L1417.500 268.500Z" />
      <path d="M1417.500 260L1424.500 262.500L1432 260M1424.500 262.500V272" />
    </g>
  </svg>
);

const AxisCross = () => (
  <svg width="40" height="34" viewBox="1390 681 40 34" role="img" aria-label="Axis cross">
    <path d="M1417.500 709V694" stroke="#24248c" strokeWidth="1" />
    <path d="M1417.500 690L1420 697H1415Z" fill="#24248c" />
    <path d="M1417 709.500H1404" stroke="#1d7a1d" />
    <path d="M1398 709.500L1405 707V712Z" fill="#1d8a1d" />
    <rect x="1416.500" y="709" width="2" height="2" fill="#b02020" />
    <g fontFamily="Liberation Sans, sans-serif" fontSize="7" fontWeight="700" fill="#0a0a0a">
      <text x="1417" y="688">Z</text>
      <text x="1398" y="708">Y</text>
      <text x="1417" y="708">X</text>
    </g>
  </svg>
);

const MENUS = ["File", "Edit", "View", "Tools", "Macro", "Sketch", "Part Design", "Windows", "Help"];

export default function App() {
  return (
    <Window>
      <GlobalStyle />
      <TitleBar>
        <FreeCadLogo />
        <WindowTitle>* esp32 with pins FCStd - FreeCAD 1.0.0</WindowTitle>
        <WindowControls>
          <WindowButton aria-label="Minimize">
            <svg width="8" height="8"><path d="M0 4.500H8" stroke="#111" /></svg>
          </WindowButton>
          <WindowButton aria-label="Restore">
            <svg width="8" height="8" fill="none" stroke="#111"><path d="M.5 2.500H5.500V7.500H.5ZM2.500 2V.5H7.500V5.500H6" /></svg>
          </WindowButton>
          <WindowButton aria-label="Close">
            <CloseMark size={8} color="#111" />
          </WindowButton>
        </WindowControls>
      </TitleBar>

      <MenuBar aria-label="Main menu">
        {MENUS.map((name) => (
          <MenuItem key={name}>{name}</MenuItem>
        ))}
      </MenuBar>

      <Toolbar label="File" items={FILE_TOOLS} />
      <Toolbar label="View" items={VIEW_TOOLS} />
      <Toolbar label="Part Design" items={PART_TOOLS} wide />
      <Toolbar label="Help" items={HELP_TOOLS} />

      <Body>
        <Dock>
          <TabStrip $height={19} $top={1}>
            <DockTab $active>Model</DockTab>
            <DockTab>Tasks</DockTab>
          </TabStrip>
          <DockTitle>
            <DockName>Model</DockName>
            <DockButton aria-label="Float panel">
              <svg width="7" height="7" fill="none" stroke="#777"><path d="M.5 .5H6.500V6.500H.5ZM.5 2H6.500" /></svg>
            </DockButton>
            <DockButton aria-label="Overlay panel">
              <svg width="7" height="7" fill="none" stroke="#777"><path d="M.5 2.500H4.500V6.500H.5ZM2.500 2V.5H6.500V4.500H5" /></svg>
            </DockButton>
            <DockButton aria-label="Close panel">
              <CloseMark color="#777" />
            </DockButton>
          </DockTitle>
          <Tree>
            <TreeRow>
              <TreeToggle aria-label="Collapse document">
                <Caret color="#f0f0f0" w={7} h={4} />
              </TreeToggle>
              <TreeGlyph $gap={7}><DocIcon /></TreeGlyph>
              <TreeLabel $gap={6}>esp32 with pins FCStd</TreeLabel>
            </TreeRow>
            <TreeRow $child>
              <TreeToggle aria-label="Expand part">
                <svg width="4" height="7"><path d="M0 0L4 3.500L0 7Z" fill="#f0f0f0" /></svg>
              </TreeToggle>
              <TreeGlyph $gap={9}>
                <svg width="7" height="5" fill="none" stroke="#f0f0f0" strokeWidth="1.200"><path d="M2.500 .5L.5 2.500L2.500 4.500M4.500 .5L6.500 2.500L4.500 4.500M3 2.500H4" /></svg>
              </TreeGlyph>
              <TreeGlyph $gap={8}>
                <svg width="11" height="11" viewBox="0 0 11 11">
                  <path d="M1 4L5 1L10 7V9L5 11L1 9Z" fill="#e2c51c" stroke="#5c4c04" strokeWidth=".6" />
                  <circle cx="7" cy="3.800" r="3.600" fill="#3d78c8" />
                  <path d="M5 4L6.500 5.500L9 2" stroke="#fff" strokeWidth="1.200" fill="none" />
                </svg>
              </TreeGlyph>
              <TreeLabel $gap={4}>Part</TreeLabel>
            </TreeRow>
          </Tree>
          <Splitter />
          <Properties aria-label="Properties" />
          <ScrollTrack>
            <ScrollEnd $width={10} aria-label="Scroll left"><ScrollDot /></ScrollEnd>
            <ScrollThumb />
            <ScrollEnd $width={12} aria-label="Scroll right"><ScrollDot /></ScrollEnd>
          </ScrollTrack>
          <TabStrip $height={18}>
            <DockTab $active>View</DockTab>
            <DockTab>Data</DockTab>
          </TabStrip>
        </Dock>

        <DocumentArea>
          <Viewport>
            <BoardModel />
            <NavigationOverlay><NavigationCube /></NavigationOverlay>
            <AxisOverlay><AxisCross /></AxisOverlay>
            <FrameStats>12.4 ms / 1.2 fps</FrameStats>
          </Viewport>
          <DocumentTabs>
            <DocumentTab>
              <FreeCadLogo size={11} />
              <TabName $gap={8}>Start</TabName>
              <PlainButton aria-label="Close Start"><CloseMark /></PlainButton>
            </DocumentTab>
            <DocumentTab $active>
              <DocIcon />
              <TabName $gap={8}>esp32 with pins FCStd : 1*</TabName>
              <PlainButton aria-label="Close document"><CloseMark /></PlainButton>
            </DocumentTab>
          </DocumentTabs>
        </DocumentArea>
      </Body>

      <StatusBar>
        <StatusText>
          <span>T</span>
          <span>, Internal name: Part</span>
        </StatusText>
        <StatusCombo $width={68} $indent={16}>
          <svg width="9" height="11" fill="none" stroke="#e8e8e8"><rect x="1" y=".5" width="7" height="10" rx="3.500" /><path d="M4.500 2.500V5" /></svg>
          <PlainSelect aria-label="Navigation style" $indent={3}>
            <option>CAD</option>
          </PlainSelect>
          <Caret color="#f4f4f4" w={7} h={4} />
        </StatusCombo>
        <StatusCombo $width={97} $indent={2}>
          <PlainSelect aria-label="Unit system">
            <option>49,17 mm x 21,87 mm</option>
          </PlainSelect>
          <Caret color="#f4f4f4" w={7} h={4} />
        </StatusCombo>
      </StatusBar>
      <Tooltip role="tooltip">Start</Tooltip>
    </Window>
  );
}
